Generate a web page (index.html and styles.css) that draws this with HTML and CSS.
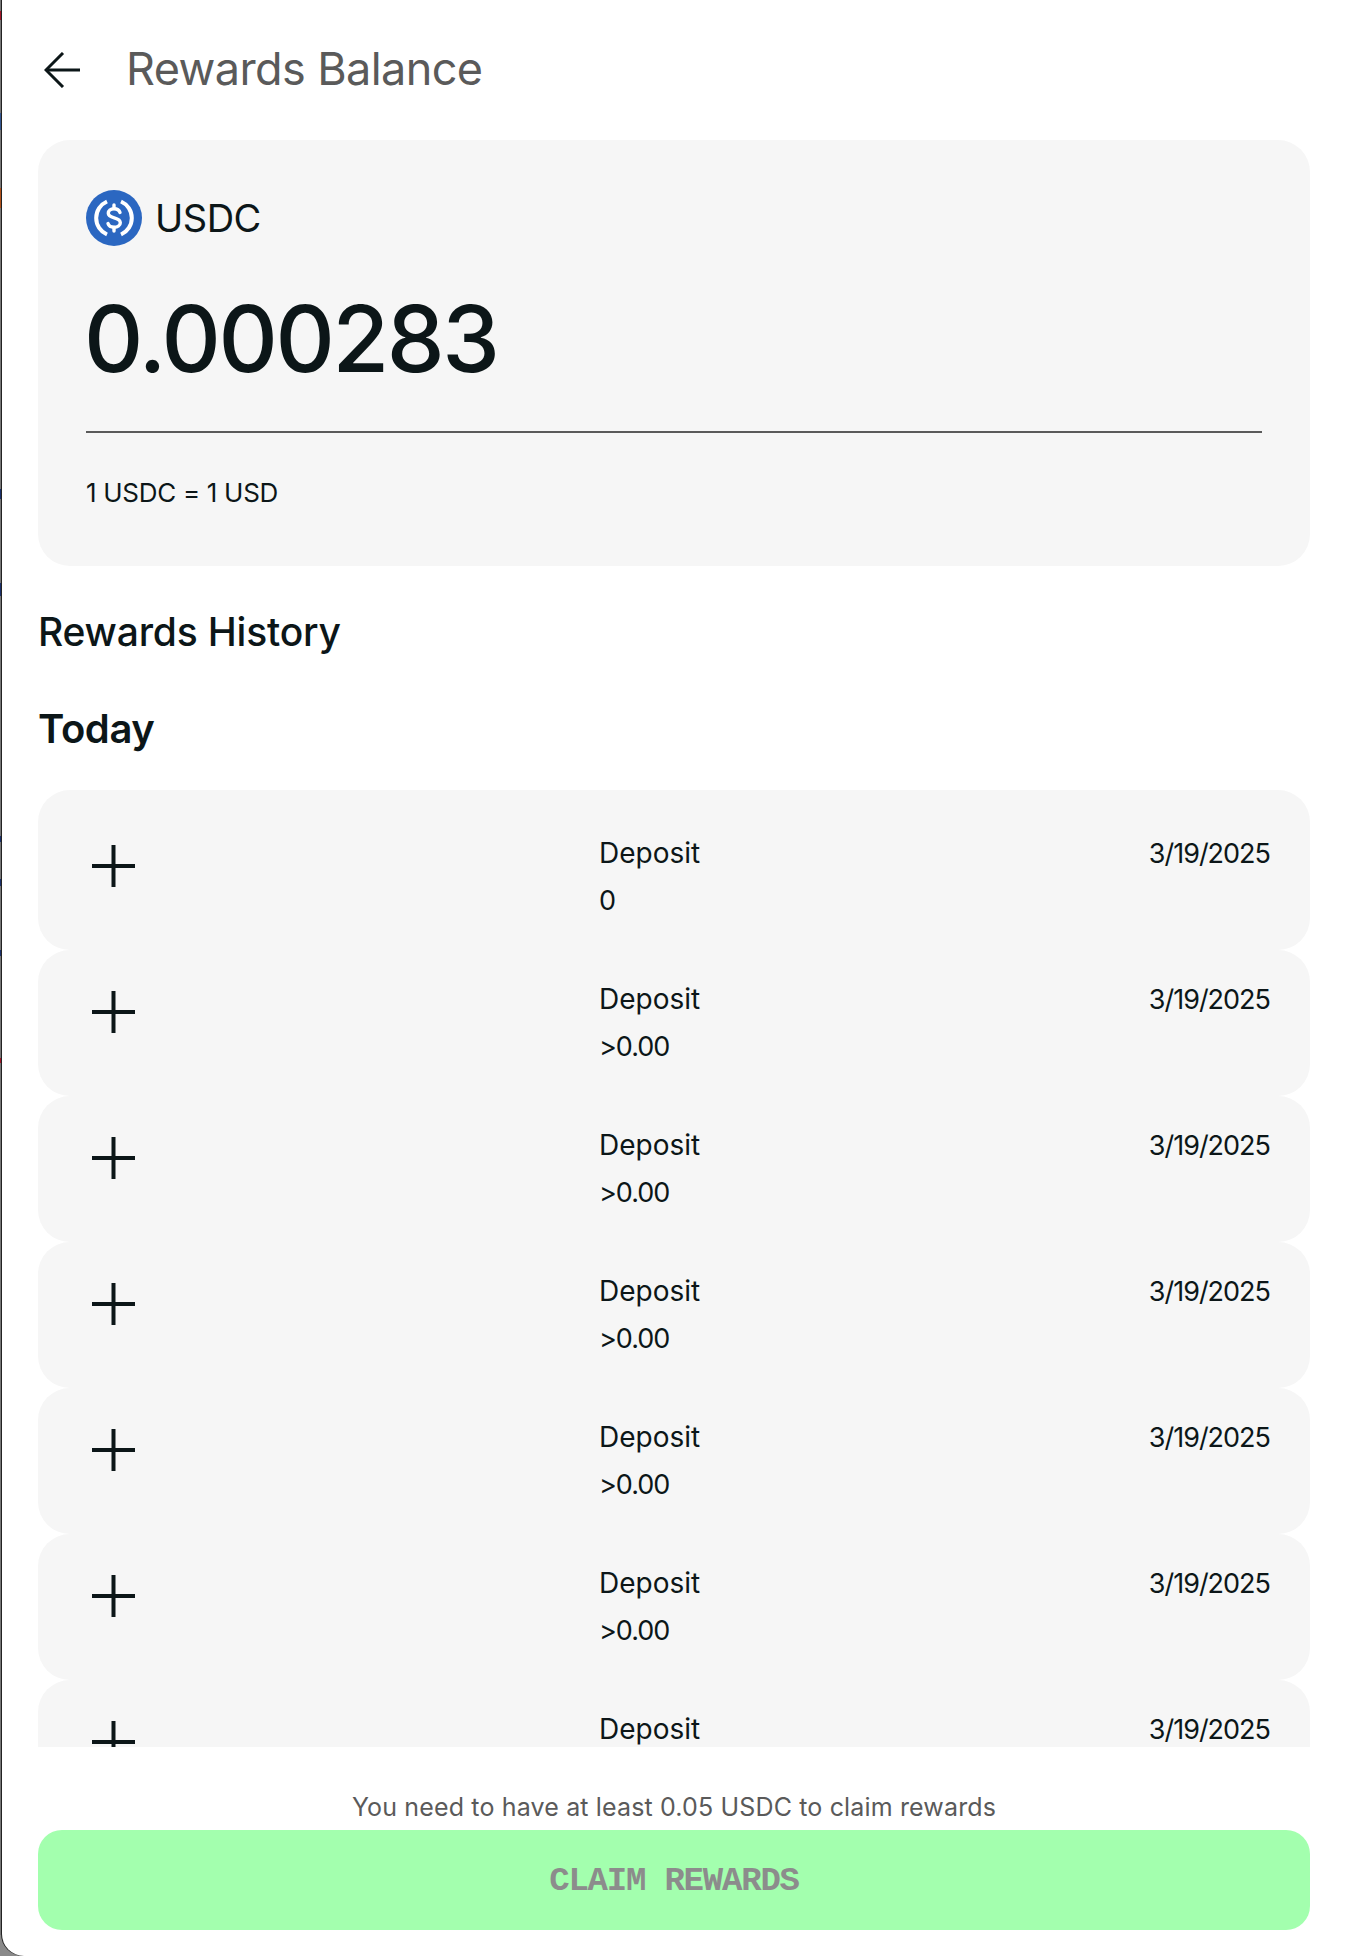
FILE: index.html
```html
<!DOCTYPE html>
<html lang="en">
<head>
    <meta charset="UTF-8">
    <title>Rewards Balance</title>
    <link rel="stylesheet" href="styles.css">
</head>
<body>
<div class="window">
    <div class="header">
        <svg class="back-icon" viewBox="0 0 36 36" fill="none" stroke="#0c1618" stroke-width="3">
            <path d="M36 18H2"/>
            <path d="M19 1L2 18L19 35"/>
        </svg>
        <div class="title">Rewards Balance</div>
    </div>

    <div class="balance-card">
        <div class="token">
            <svg class="token-icon" viewBox="0 0 56 56">
                <circle cx="28" cy="28" r="28" fill="#2b67c1"/>
                <g fill="none" stroke="#fff" stroke-width="4">
                    <path d="M21 11.500A18 18 0 0 0 21 44.500"/>
                    <path d="M35 11.500A18 18 0 0 1 35 44.500"/>
                </g>
                <g fill="none" stroke="#fff" stroke-width="3.400" stroke-linecap="round">
                    <path d="M34 22.500C33 19.500 30.500 18.800 28 18.800C24.500 18.800 22.300 20.800 22.300 23.300C22.300 29.300 34.300 26.500 34.300 32.700C34.300 35.300 31.800 37.200 28 37.200C25 37.200 22.800 36 22 33.500"/>
                    <path d="M28 15V18.500"/>
                    <path d="M28 37.500V41"/>
                </g>
            </svg>
            <span class="token-name">USDC</span>
        </div>
        <div class="amount">0.000283</div>
        <div class="divider"></div>
        <div class="rate">1 USDC = 1 USD</div>
    </div>

    <div class="section-title">Rewards History</div>
    <div class="day-title">Today</div>

    <div class="history">
        <div class="row">
            <svg class="plus-icon" viewBox="0 0 43 42" fill="none" stroke="#0c1618" stroke-width="4"><path d="M0 21H43"/><path d="M21.500 0V42"/></svg>
            <div class="row-info"><div class="row-type">Deposit</div><div>0</div></div>
            <div class="row-date">3/19/2025</div>
        </div>
        <div class="row">
            <svg class="plus-icon" viewBox="0 0 43 42" fill="none" stroke="#0c1618" stroke-width="4"><path d="M0 21H43"/><path d="M21.500 0V42"/></svg>
            <div class="row-info"><div class="row-type">Deposit</div><div>&gt;0.00</div></div>
            <div class="row-date">3/19/2025</div>
        </div>
        <div class="row">
            <svg class="plus-icon" viewBox="0 0 43 42" fill="none" stroke="#0c1618" stroke-width="4"><path d="M0 21H43"/><path d="M21.500 0V42"/></svg>
            <div class="row-info"><div class="row-type">Deposit</div><div>&gt;0.00</div></div>
            <div class="row-date">3/19/2025</div>
        </div>
        <div class="row">
            <svg class="plus-icon" viewBox="0 0 43 42" fill="none" stroke="#0c1618" stroke-width="4"><path d="M0 21H43"/><path d="M21.500 0V42"/></svg>
            <div class="row-info"><div class="row-type">Deposit</div><div>&gt;0.00</div></div>
            <div class="row-date">3/19/2025</div>
        </div>
        <div class="row">
            <svg class="plus-icon" viewBox="0 0 43 42" fill="none" stroke="#0c1618" stroke-width="4"><path d="M0 21H43"/><path d="M21.500 0V42"/></svg>
            <div class="row-info"><div class="row-type">Deposit</div><div>&gt;0.00</div></div>
            <div class="row-date">3/19/2025</div>
        </div>
        <div class="row">
            <svg class="plus-icon" viewBox="0 0 43 42" fill="none" stroke="#0c1618" stroke-width="4"><path d="M0 21H43"/><path d="M21.500 0V42"/></svg>
            <div class="row-info"><div class="row-type">Deposit</div><div>&gt;0.00</div></div>
            <div class="row-date">3/19/2025</div>
        </div>
        <div class="row">
            <svg class="plus-icon" viewBox="0 0 43 42" fill="none" stroke="#0c1618" stroke-width="4"><path d="M0 21H43"/><path d="M21.500 0V42"/></svg>
            <div class="row-info"><div class="row-type">Deposit</div></div>
            <div class="row-date">3/19/2025</div>
        </div>
    </div>

    <div class="claim-note">You need to have at least 0.05 USDC to claim rewards</div>
    <div class="claim-button">CLAIM REWARDS</div>
</div>
</body>
</html>
```

FILE: styles.css
```css
html, body {
    margin: 0;
    height: 100%;
}

body {
    /* edge of the window behind, only 1px of it shows */
    background-color: #8a8a8a;
    background-image: linear-gradient(#777 0, #777 11px, #a01528 11px, #a01528 20px, #777 20px, #777 113px, #33558f 113px, #33558f 130px, #777 130px, #777 188px, #b0501a 188px, #b0501a 208px, #777 208px, #777 489px, #1a2f6a 489px, #1a2f6a 499px, #777 499px, #777 583px, #1a2f6a 583px, #1a2f6a 596px, #777 596px, #777 836px, #1a2f6a 836px, #1a2f6a 842px, #777 842px, #777 879px, #1a2f6a 879px, #1a2f6a 886px, #777 886px, #777 950px, #1a2f6a 950px, #1a2f6a 956px, #777 956px, #777 1058px, #a01528 1058px, #a01528 1063px, #777 1063px);
    background-size: 1px 1935px;
    background-position: 0 0;
    background-repeat: no-repeat;
    font-family: "Inter", "Noto Sans", sans-serif;
    color: #0c1618;
}

.window {
    box-sizing: border-box;
    height: 1956px;
    margin-left: 2px;
    padding: 0 36px 26px;
    background: #fff;
    border-bottom-left-radius: 22px;
    box-shadow: -1px 0 0 #222;
    display: flex;
    flex-direction: column;
}

.header {
    height: 140px;
    box-sizing: border-box;
    flex-shrink: 0;
    display: flex;
    align-items: center;
    gap: 46px;
    padding-left: 6px;
}

.back-icon {
    width: 36px;
    height: 36px;
}

.title {
    font-size: 45px;
    line-height: 54px;
    margin-top: -2px;
    color: #5a5a5a;
    letter-spacing: -0.6px;
}

.balance-card {
    height: 426px;
    box-sizing: border-box;
    flex-shrink: 0;
    padding: 50px 48px 0;
    background: #f6f6f6;
    border-radius: 32px;
}

.token {
    display: flex;
    align-items: center;
    gap: 13px;
    height: 56px;
}

.token-icon {
    width: 56px;
    height: 56px;
}

.token-name {
    font-size: 38px;
    letter-spacing: -0.5px;
}

.amount {
    margin-top: 45px;
    margin-left: -2px;
    font-size: 92px;
    line-height: 96px;
    font-weight: 500;
    letter-spacing: -2.400px;
}

.divider {
    margin-top: 44px;
    height: 2px;
    background: #5a5a5a;
}

.rate {
    margin-top: 40px;
    font-size: 26px;
    line-height: 40px;
    letter-spacing: -0.3px;
}

.section-title {
    margin-top: 42px;
    font-size: 39px;
    line-height: 48px;
    font-weight: 500;
    letter-spacing: -0.2px;
}

.day-title {
    margin-top: 49px;
    font-size: 40px;
    line-height: 48px;
    font-weight: 600;
    letter-spacing: -0.4px;
}

.history {
    margin-top: 37px;
    flex: 1;
    min-height: 0;
    overflow: hidden;
    border-radius: 20px 20px 0 0;
}

.row {
    box-sizing: border-box;
    height: 146px;
    padding: 26px 40px 0 54px;
    background: #f6f6f6;
    border-radius: 32px;
    display: grid;
    grid-template-columns: 507px 1fr auto;
    font-size: 27px;
    line-height: 47px;
    letter-spacing: -1px;
}

.row:first-child {
    height: 160px;
    padding-top: 40px;
}

.plus-icon {
    width: 43px;
    height: 42px;
    margin-top: 15px;
}

.row-type {
    font-size: 28px;
    letter-spacing: 0;
}

.claim-note {
    margin-top: 42px;
    margin-bottom: 5px;
    font-size: 25px;
    line-height: 36px;
    letter-spacing: 0.150px;
    color: #5a5a5a;
    text-align: center;
}

.claim-button {
    height: 100px;
    flex-shrink: 0;
    background: #a3ffae;
    border-radius: 24px;
    display: flex;
    align-items: center;
    justify-content: center;
    padding-top: 2px;
    box-sizing: border-box;
    font-family: "Liberation Mono", monospace;
    font-size: 34px;
    font-weight: bold;
    letter-spacing: -1.200px;
    color: #8c8c8c;
}
```
